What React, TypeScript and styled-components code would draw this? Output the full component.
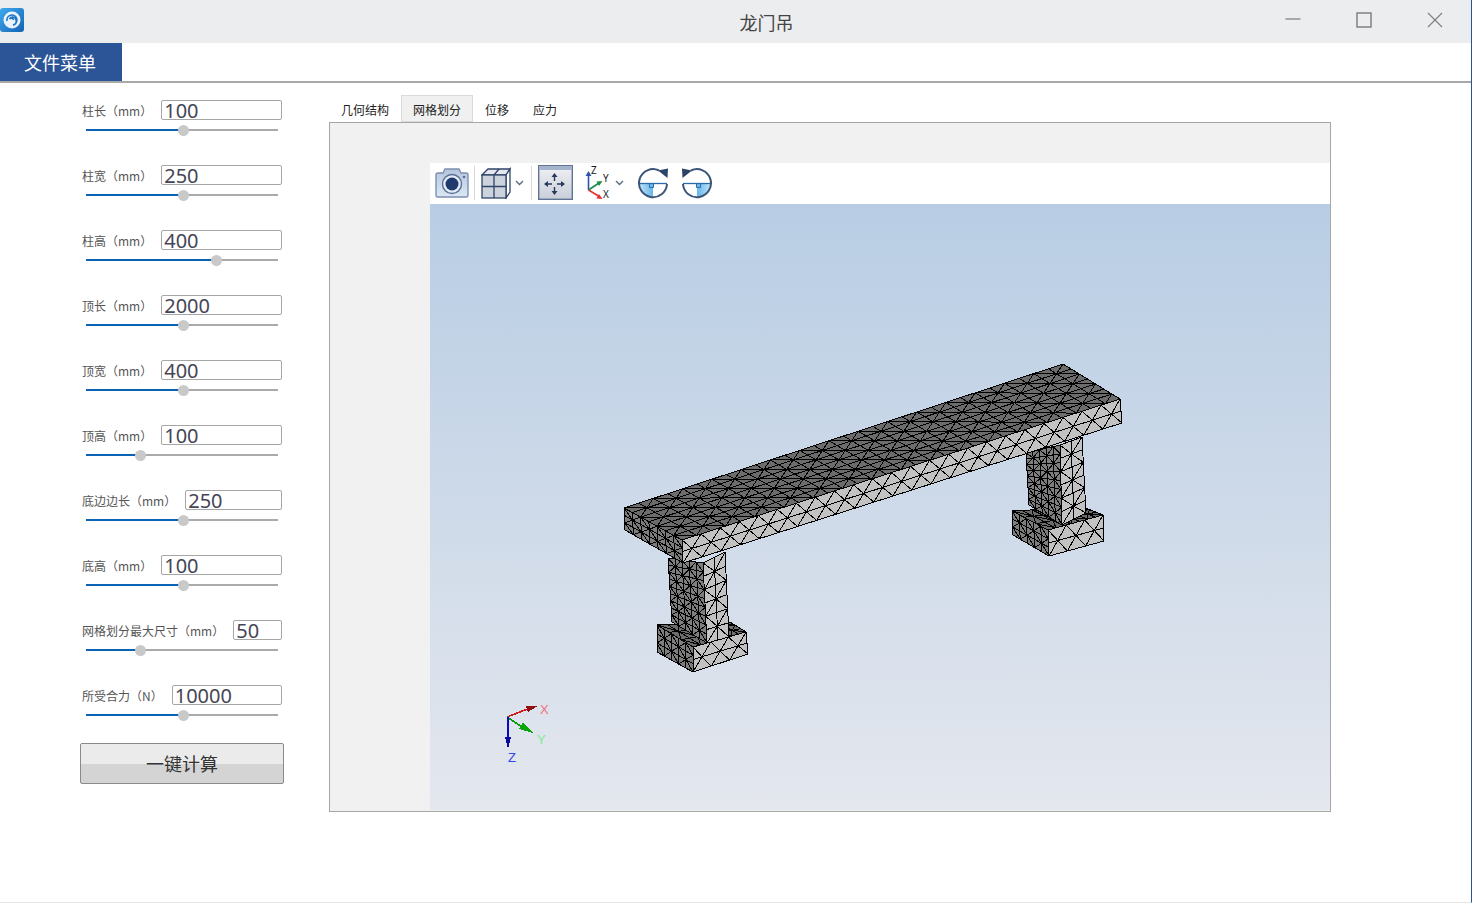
import React from "react"
import styled, { createGlobalStyle } from "styled-components"

const GlobalStyle = createGlobalStyle`
  html, body {
    margin: 0;
    padding: 0;
    background: #fff;
    font-family: "Noto Sans CJK SC", "Noto Sans", sans-serif;
  }
  * { box-sizing: border-box; }
`

const Window = styled.div`
  width: 1472px;
  height: 903px;
  display: flex;
  flex-direction: column;
  background: #fff;
  border-right: 1px solid #2b5597;
  border-bottom: 1px solid #e4e4e4;
  overflow: hidden;
`

const TitleBar = styled.div`
  height: 43px;
  flex: none;
  background: #ecedef;
  display: grid;
  grid-template-columns: 1fr auto 1fr;
  align-items: center;
`

const Logo = styled.div`
  width: 24px;
  height: 24px;
  margin-top: -4px;
`

const Title = styled.div`
  font-size: 18px;
  color: #444;
  margin-left: 62px;
`

const WindowButtons = styled.div`
  display: flex;
  justify-content: flex-end;
  align-items: center;
  gap: 55px;
  padding-right: 28px;
  margin-top: -3px;
`

const MenuBar = styled.div`
  height: 40px;
  flex: none;
  border-bottom: 2px solid #a8a8a8;
  display: flex;
`

const MenuButton = styled.div`
  width: 122px;
  height: 38px;
  background: #2b5597;
  color: #fff;
  font-size: 18px;
  line-height: 39px;
  text-align: center;
  padding-right: 2px;
`

const Body = styled.div`
  flex: 1;
  display: flex;
  min-height: 0;
`

const Sidebar = styled.div`
  width: 329px;
  flex: none;
  padding: 17px 0 0 80px;
`

const Param = styled.div`
  width: 204px;
  height: 65px;
  padding: 0 2px;
`

const ParamRow = styled.div`
  display: flex;
  align-items: center;
  gap: 9px;
  height: 20px;
`

const ParamLabel = styled.label`
  font-size: 12px;
  color: #555;
  white-space: nowrap;
`

const ParamInput = styled.div`
  flex: 1;
  height: 20px;
  border: 1px solid #a6a6a6;
  border-radius: 2px;
  font-family: "Noto Sans", sans-serif;
  font-size: 20px;
  line-height: 19px;
  color: #454555;
  padding-left: 2px;
  background: #fff;
`

const Track = styled.div`
  position: relative;
  height: 2px;
  margin: 9px 4px 0;
  background: #aaaaaa;
`

const TrackFill = styled.div`
  height: 2px;
  background: #0a62b5;
`

const Thumb = styled.div`
  position: absolute;
  top: -4px;
  width: 11px;
  height: 11px;
  margin-left: -5px;
  border-radius: 50%;
  background: #c9c9c9;
`

const CalcButton = styled.button`
  display: block;
  width: 204px;
  height: 41px;
  margin-top: -7px;
  padding: 0 0 2px;
  border: 1px solid #8a8a8a;
  border-radius: 2px;
  background: linear-gradient(#ebebeb 0 52%, #d4d4d4 52% 100%);
  font-family: inherit;
  font-size: 18px;
  color: #333;
`

const Content = styled.div`
  width: 1002px;
  flex: none;
  padding-top: 12px;
`

const TabBar = styled.div`
  display: flex;
  height: 27px;
`

const Tab = styled.div<{ $active?: boolean }>`
  padding: 0 12px;
  height: 27px;
  line-height: 29px;
  font-size: 12px;
  color: #222;
  background: ${p => (p.$active ? "#f0f0f0" : "transparent")};
  box-shadow: ${p => (p.$active ? "inset 0 0 0 1px #dadada" : "none")};
`

const Panel = styled.div`
  height: 690px;
  border: 1px solid #a6a6a6;
  background: #f1f1f1;
  padding: 40px 0 0 100px;
`

const Toolbar = styled.div`
  height: 41px;
  background: #fff;
  display: flex;
  align-items: center;
  padding-left: 4px;
  padding-bottom: 2px;
`

const ToolDivider = styled.div<{ $left: number; $right: number }>`
  width: 1px;
  height: 34px;
  background: #d8d8d8;
  margin: 0 ${p => p.$right}px 0 ${p => p.$left}px;
`

const Viewport = styled.div`
  position: relative;
  height: 606px;
  background: linear-gradient(#b8cde4, #e4e7ee);
`

const Scene = styled.svg`
  position: absolute;
  inset: 0;
  width: 100%;
  height: 100%;
`

type Pt = [number, number]

type Face = { a: Pt; b: Pt; c: Pt; d: Pt; nu: number; nv: number; fill: string; zigzag?: boolean }

const lerp = (a: Pt, b: Pt, t: number): Pt => [a[0] + (b[0] - a[0]) * t, a[1] + (b[1] - a[1]) * t]

// a--b on top, d--c below; split in nu x nv cells, each with a diagonal.
// zigzag faces leave out the inner cross lines so only the big triangles show
function MeshFace({ a, b, c, d, nu, nv, fill, zigzag }: Face) {
  const at = (i: number, j: number) => lerp(lerp(a, b, i / nu), lerp(d, c, i / nu), j / nv)
  const f = ([x, y]: Pt) => `${x.toFixed(1)} ${y.toFixed(1)}`
  let lines = ""
  for (let i = 0; i <= nu; i++) {
    if (zigzag && i > 0 && i < nu) continue
    lines += `M${f(at(i, 0))}L${f(at(i, nv))}`
  }
  for (let j = 0; j <= nv; j++) lines += `M${f(at(0, j))}L${f(at(nu, j))}`
  for (let i = 0; i < nu; i++) {
    for (let j = 0; j < nv; j++) {
      lines += (i + j) % 2 === 0 ? `M${f(at(i, j))}L${f(at(i + 1, j + 1))}` : `M${f(at(i + 1, j))}L${f(at(i, j + 1))}`
    }
  }
  return (
    <g shapeRendering="crispEdges">
      <polygon points={[a, b, c, d].map(f).join(" ")} fill={fill} />
      <path d={lines} stroke="#000" strokeWidth={1} fill="none" />
    </g>
  )
}

const DARK_TOP = "#6c6c6c"
const DARK_SIDE = "#7e7e7e"
const LIGHT = "#c2c2c2"

const faces: Face[] = [
  // far leg
  { a: [1012, 511], b: [1083, 507], c: [1103, 515], d: [1048, 530], nu: 7, nv: 3, fill: DARK_TOP },
  { a: [1012, 511], b: [1048, 530], c: [1049, 556], d: [1013, 535], nu: 5, nv: 3, fill: DARK_SIDE },
  { a: [1048, 530], b: [1103, 515], c: [1104, 541], d: [1049, 556], nu: 6, nv: 2, fill: LIGHT, zigzag: true },
  { a: [1026, 453], b: [1060, 445], c: [1062, 525], d: [1029, 505], nu: 5, nv: 9, fill: DARK_SIDE },
  { a: [1060, 445], b: [1082, 437], c: [1086, 513], d: [1062, 525], nu: 2, nv: 6, fill: LIGHT },
  // near leg
  { a: [657, 625], b: [730, 622], c: [746, 632], d: [693, 647], nu: 7, nv: 3, fill: DARK_TOP },
  { a: [657, 625], b: [693, 647], c: [693, 672], d: [657, 652], nu: 5, nv: 3, fill: DARK_SIDE },
  { a: [693, 647], b: [746, 632], c: [748, 654], d: [693, 672], nu: 6, nv: 2, fill: LIGHT, zigzag: true },
  { a: [668, 558], b: [703, 563], c: [707, 643], d: [672, 622], nu: 5, nv: 9, fill: DARK_SIDE },
  { a: [703, 563], b: [725, 552], c: [729, 637], d: [707, 643], nu: 2, nv: 6, fill: LIGHT },
  // top beam
  { a: [624, 508], b: [682, 540], c: [683, 563], d: [625, 530], nu: 7, nv: 3, fill: DARK_SIDE },
  { a: [682, 540], b: [1120, 399], c: [1122, 423], d: [683, 563], nu: 46, nv: 2, fill: LIGHT, zigzag: true },
  { a: [624, 508], b: [1063, 364], c: [1120, 399], d: [682, 540], nu: 30, nv: 7, fill: DARK_TOP },
]

const CameraIcon = () => (
  <svg width="36" height="32" viewBox="0 0 36 32">
    <defs>
      <linearGradient id="camBody" x1="0" y1="0" x2="0" y2="1">
        <stop offset="0" stopColor="#b4c6dc" />
        <stop offset="1" stopColor="#dbe7f5" />
      </linearGradient>
    </defs>
    <path d="M2 8 Q2 6 4 6 H9 L11 2 H25 L27 6 H32 Q34 6 34 8 V28 Q34 30 32 30 H4 Q2 30 2 28 Z" fill="url(#camBody)" stroke="#7d8fb0" strokeWidth="1.4" />
    <circle cx="18" cy="17" r="9.5" fill="#e6edf6" stroke="#5b7096" strokeWidth="1.4" />
    <circle cx="18" cy="17" r="6.5" fill="#1f3a6c" />
    <circle cx="30" cy="10" r="1.3" fill="#5b7096" />
  </svg>
)

const CubeIcon = () => (
  <svg width="32" height="32" viewBox="0 0 32 32">
    <path d="M1 8 L7 2 H29 L25 8 Z" fill="#e4e8ee" stroke="#2f4468" strokeWidth="1.3" />
    <path d="M25 8 L29 2 V25 L25 31 Z" fill="#fff" stroke="#2f4468" strokeWidth="1.3" />
    <rect x="1" y="8" width="24" height="23" fill="#cdd3dc" stroke="#2f4468" strokeWidth="1.3" />
    <path d="M13 8 V31 M1 19.5 H25 M13 8 L18 2" stroke="#2f4468" strokeWidth="1.3" fill="none" />
  </svg>
)

const Chevron = () => (
  <svg width="9" height="6" viewBox="0 0 9 6">
    <path d="M1 1 L4.5 4.5 L8 1" stroke="#5d6b80" strokeWidth="1.4" fill="none" />
  </svg>
)

const FitIcon = () => (
  <svg width="35" height="35" viewBox="0 0 35 35">
    <defs>
      <linearGradient id="fitBody" x1="0" y1="0" x2="0" y2="1">
        <stop offset="0" stopColor="#f0f1f4" />
        <stop offset="1" stopColor="#c9ced9" />
      </linearGradient>
    </defs>
    <rect x="0.7" y="0.7" width="33.6" height="33.6" fill="url(#fitBody)" stroke="#5f7397" strokeWidth="1.4" />
    <rect x="1" y="1" width="33" height="4" fill="#a5b4cc" />
    <path d="M16.5 10 V16 M16.5 22 V28 M8 19 H14 M19 19 H25" stroke="#26395c" strokeWidth="1.4" />
    <path d="M16.5 8 l-3 4 h6 Z M16.5 30 l-3 -4 h6 Z M6 19 l4 -3 v6 Z M27 19 l-4 -3 v6 Z" fill="#26395c" />
  </svg>
)

const AxesIcon = () => (
  <svg width="26" height="40" viewBox="0 -2 26 40" fontFamily="Noto Sans, sans-serif" fontSize="10" fill="#222">
    <path d="M3.5 25 V9" stroke="#2c55a8" strokeWidth="1.6" />
    <path d="M3.5 6 l-3 5 h6 Z" fill="#2c55a8" />
    <path d="M3.5 25 L14 18" stroke="#1a8f45" strokeWidth="1.6" />
    <path d="M17.5 16 l-6 0.5 l2.5 4.5 Z" fill="#1a8f45" />
    <path d="M3.5 25 L13.5 31" stroke="#e33030" strokeWidth="1.6" />
    <path d="M17.5 34 l-6 -0.5 l2.5 -4.5 Z" fill="#e33030" />
    <text x="6" y="9">Z</text>
    <text x="18" y="17">Y</text>
    <text x="18" y="33">X</text>
  </svg>
)

const RotateIcon = ({ flip }: { flip?: boolean }) => (
  <svg width="32" height="32" viewBox="0 0 32 32" transform={flip ? "scale(-1 1)" : undefined}>
    <defs>
      <linearGradient id={flip ? "rotFillB" : "rotFillA"} x1="0" y1="0" x2="1" y2="0">
        <stop offset="0" stopColor="#c4e5f9" />
        <stop offset="1" stopColor="#64b6ea" />
      </linearGradient>
    </defs>
    <path d="M16 16 H2 A14 14 0 0 0 16 30 Z" fill={`url(#${flip ? "rotFillB" : "rotFillA"})`} />
    <path d="M2 16.5 H30" stroke="#2b6ca8" strokeWidth="1.3" />
    <path d="M12.5 16.5 V20.5 H16.5 V16.5" stroke="#2b6ca8" strokeWidth="1" fill="none" />
    <path d="M22 3.5 A14 14 0 1 0 30 17" stroke="#3c5478" strokeWidth="2" fill="none" />
    <path d="M21 3.5 L31 1.5 L30.5 11 Z" fill="#2c4468" />
  </svg>
)

const ToolSlot = styled.div<{ $gap: number }>`
  display: flex;
  align-items: center;
  margin-right: ${p => p.$gap}px;
`

const ChevronSlot = styled.div<{ $left: number }>`
  display: flex;
  margin-left: ${p => p.$left}px;
`

const params = [
  { label: "柱长（mm）", value: "100", at: 0.505 },
  { label: "柱宽（mm）", value: "250", at: 0.505 },
  { label: "柱高（mm）", value: "400", at: 0.677 },
  { label: "顶长（mm）", value: "2000", at: 0.505 },
  { label: "顶宽（mm）", value: "400", at: 0.505 },
  { label: "顶高（mm）", value: "100", at: 0.281 },
  { label: "底边边长（mm）", value: "250", at: 0.505 },
  { label: "底高（mm）", value: "100", at: 0.505 },
  { label: "网格划分最大尺寸（mm）", value: "50", at: 0.281 },
  { label: "所受合力（N）", value: "10000", at: 0.505 },
]

export default function App() {
  return (
    <Window>
      <GlobalStyle />
      <TitleBar>
        <Logo>
          <svg width="24" height="24" viewBox="0 0 24 24">
            <defs>
              <linearGradient id="logoBg" x1="0" y1="0" x2="1" y2="1">
                <stop offset="0" stopColor="#3fa9ef" />
                <stop offset="1" stopColor="#1464b4" />
              </linearGradient>
            </defs>
            <rect width="24" height="24" rx="3" fill="url(#logoBg)" />
            <circle cx="12" cy="12" r="8.5" fill="#fff" opacity="0.9" />
            <path d="M7 13 A5 5 0 1 1 13 17 A3.6 3.6 0 0 0 16 12 A3.4 3.4 0 0 0 9.5 11 A2.2 2.2 0 0 1 13.5 12" stroke="#1b74c4" strokeWidth="1.6" fill="none" />
          </svg>
        </Logo>
        <Title>龙门吊</Title>
        <WindowButtons>
          <svg width="16" height="16" viewBox="0 0 16 16">
            <path d="M0.5 7 H15.5" stroke="#888" strokeWidth="1.4" />
          </svg>
          <svg width="16" height="16" viewBox="0 0 16 16">
            <rect x="1" y="1" width="14" height="14" fill="none" stroke="#808080" strokeWidth="1.5" />
          </svg>
          <svg width="16" height="16" viewBox="0 0 16 16">
            <path d="M1 1 L15 15 M15 1 L1 15" stroke="#808080" strokeWidth="1.2" />
          </svg>
        </WindowButtons>
      </TitleBar>
      <MenuBar>
        <MenuButton>文件菜单</MenuButton>
      </MenuBar>
      <Body>
        <Sidebar>
          {params.map(p => (
            <Param key={p.label}>
              <ParamRow>
                <ParamLabel>{p.label}</ParamLabel>
                <ParamInput>{p.value}</ParamInput>
              </ParamRow>
              <Track>
                <TrackFill style={{ width: `${p.at * 100}%` }} />
                <Thumb style={{ left: `${p.at * 100}%` }} />
              </Track>
            </Param>
          ))}
          <CalcButton>一键计算</CalcButton>
        </Sidebar>
        <Content>
          <TabBar>
            <Tab>几何结构</Tab>
            <Tab $active>网格划分</Tab>
            <Tab>位移</Tab>
            <Tab>应力</Tab>
          </TabBar>
          <Panel>
            <Toolbar>
              <ToolSlot $gap={0}><CameraIcon /></ToolSlot>
              <ToolDivider $left={4} $right={6} />
              <ToolSlot $gap={0}>
                <CubeIcon />
                <ChevronSlot $left={2}><Chevron /></ChevronSlot>
              </ToolSlot>
              <ToolDivider $left={7} $right={6} />
              <ToolSlot $gap={12}><FitIcon /></ToolSlot>
              <ToolSlot $gap={13}>
                <AxesIcon />
                <ChevronSlot $left={4}><Chevron /></ChevronSlot>
              </ToolSlot>
              <ToolSlot $gap={12}><RotateIcon /></ToolSlot>
              <ToolSlot $gap={0}><RotateIcon flip /></ToolSlot>
            </Toolbar>
            <Viewport>
              <Scene viewBox="430 204 900 606">
                {faces.map((face, i) => (
                  <MeshFace key={i} {...face} />
                ))}
                <g shapeRendering="crispEdges">
                  <path d="M507 717 L530 708" stroke="#d01818" strokeWidth="1.6" />
                  <path d="M538 706 L526 706 L528 712 Z" fill="#8e1010" />
                  <path d="M507 717 L522 727" stroke="#0a9a0a" strokeWidth="1.6" />
                  <path d="M533 733 L523 722 L519 729 Z" fill="#0aa50a" />
                  <path d="M508 717 V740" stroke="#0a0ac0" strokeWidth="1.8" />
                  <path d="M508 749 L505 737 L511 737 Z" fill="#0a0a9c" />
                </g>
                <text x="540" y="714" fontFamily="Liberation Sans, sans-serif" fontSize="13" fill="#f0707c">X</text>
                <text x="537" y="744" fontFamily="Liberation Sans, sans-serif" fontSize="13" fill="#7eec90">Y</text>
                <text x="508" y="762" fontFamily="Liberation Sans, sans-serif" fontSize="13" fill="#3444ee">Z</text>
              </Scene>
            </Viewport>
          </Panel>
        </Content>
      </Body>
    </Window>
  )
}
